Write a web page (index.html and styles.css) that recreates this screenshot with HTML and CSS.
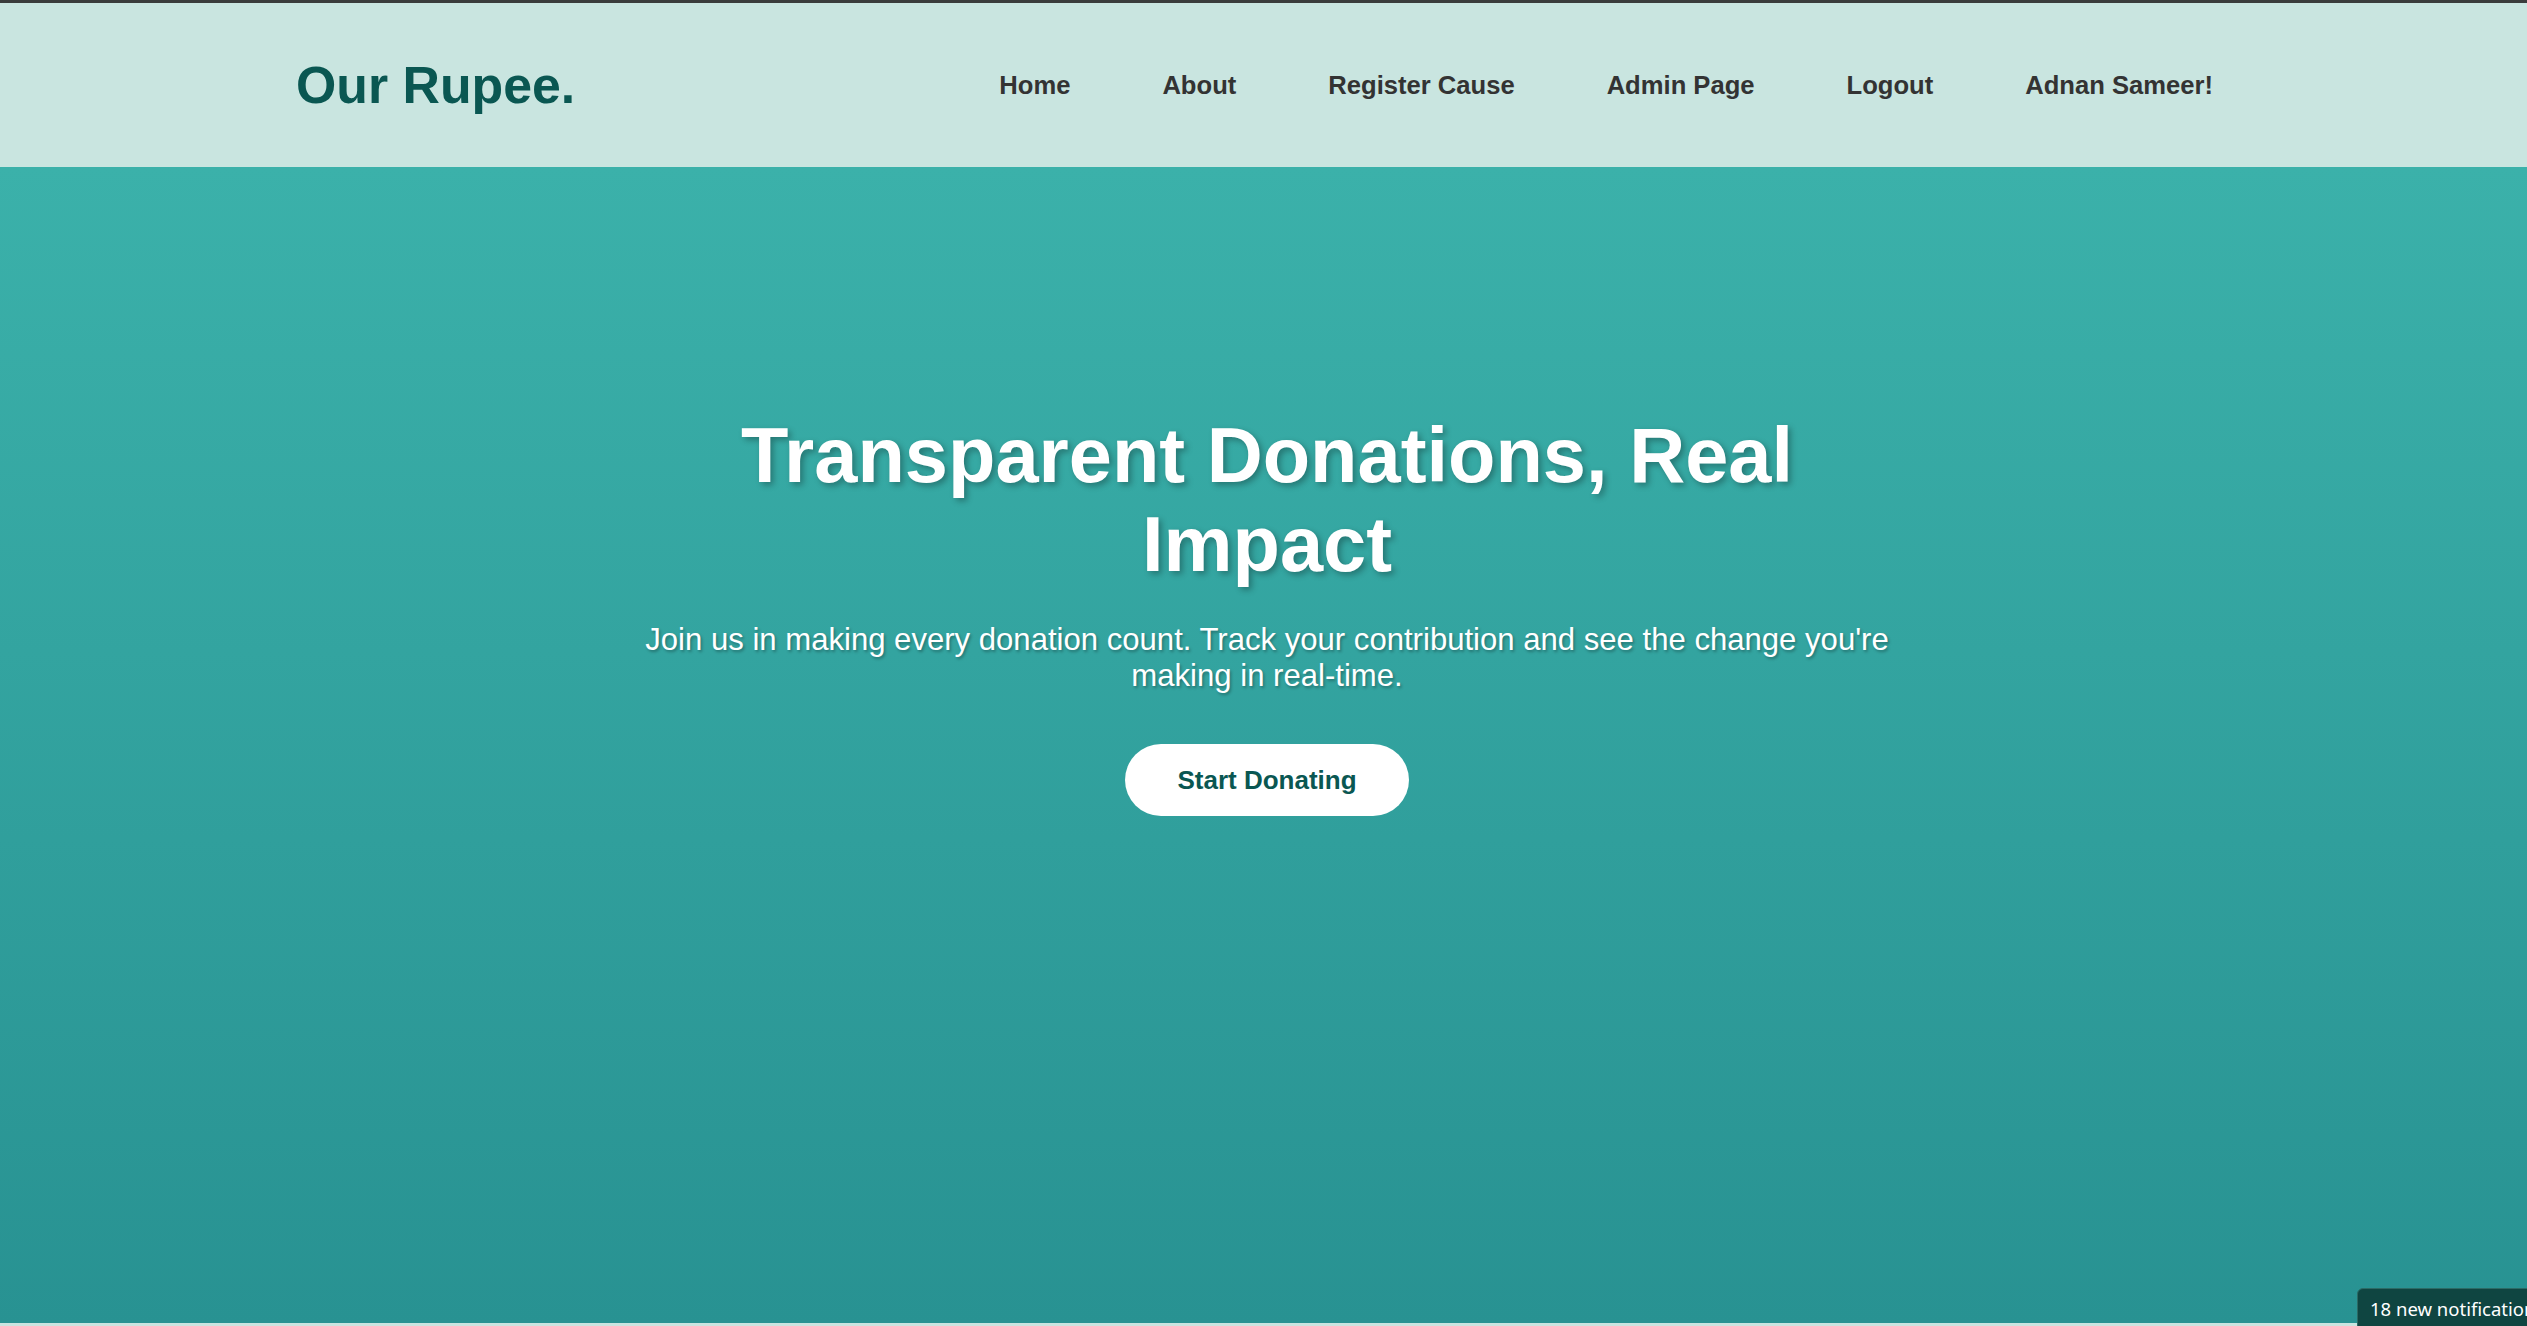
FILE: index.html
```html
<!DOCTYPE html>
<html lang="en">
<head>
<meta charset="utf-8">
<title>Our Rupee.</title>
<link rel="stylesheet" href="styles.css">
</head>
<body>
<div class="page">
  <header class="site-header">
    <a class="logo" href="#">Our Rupee.</a>
    <nav class="nav">
      <a href="#">Home</a>
      <a href="#">About</a>
      <a href="#">Register Cause</a>
      <a href="#">Admin Page</a>
      <a href="#">Logout</a>
      <a href="#">Adnan Sameer!</a>
    </nav>
  </header>
  <section class="hero">
    <div class="hero-content">
      <h1 class="hero-title">Transparent Donations, Real Impact</h1>
      <p class="hero-text">Join us in making every donation count. Track your contribution and see the change you're making in real-time.</p>
      <a class="hero-btn" href="#">Start Donating</a>
    </div>
  </section>
  <div class="strip"></div>
  <div class="toast">18 new notifications</div>
</div>
</body>
</html>
```

FILE: styles.css
```css
html, body {
  margin: 0;
  padding: 0;
  height: 100%;
  overflow: hidden;
}

body {
  font-family: "Liberation Sans", Arial, sans-serif;
  background: #c9e5e0;
}

.page {
  position: relative;
  height: 1326px;
  overflow: hidden;
  border-top: 3px solid #3a3c3c;
  box-sizing: border-box;
}

.site-header {
  height: 164px;
  background: #c9e5e0;
  display: flex;
  align-items: center;
  justify-content: space-between;
  padding: 0 314px 0 296px;
  box-sizing: border-box;
}

.logo {
  font-size: 51.8px;
  font-weight: 700;
  color: #0a5752;
  text-decoration: none;
}

.nav {
  display: flex;
  gap: 92px;
}

.nav a {
  font-size: 25.6px;
  font-weight: 700;
  color: #333333;
  text-decoration: none;
}

.hero {
  height: 1156px;
  background: linear-gradient(to bottom, #3bb1aa 0%, #289292 100%);
  padding-top: 244px;
  box-sizing: border-box;
}

.hero-content {
  max-width: 1280px;
  margin: 0 auto;
  padding-left: 7px;
  display: flex;
  flex-direction: column;
  align-items: center;
  text-align: center;
}

.hero-title {
  margin: 0;
  font-size: 77.6px;
  font-weight: 700;
  color: #ffffff;
  text-shadow: 3px 3px 6px rgba(0, 0, 0, 0.3);
}

.hero-text {
  margin: 33px 0 0;
  font-size: 31.1px;
  color: #ffffff;
  text-shadow: 1.5px 1.5px 3px rgba(0, 0, 0, 0.3);
}

.hero-btn {
  margin-top: 50px;
  display: inline-block;
  background: #ffffff;
  color: #0a5752;
  font-size: 26px;
  font-weight: 700;
  text-decoration: none;
  padding: 20.5px 52px;
  border-radius: 40px;
}

.strip {
  height: 3px;
  background: #c9e5e0;
}

.toast {
  position: absolute;
  left: 2357px;
  top: 1285px;
  width: 240px;
  height: 60px;
  background: #0f4541;
  border: 1px solid #2c6a65;
  border-radius: 6px 0 0 0;
  box-sizing: border-box;
  color: #ffffff;
  font-family: "Noto Sans", "Open Sans", sans-serif;
  font-size: 18.5px;
  padding: 7px 0 0 12px;
  white-space: nowrap;
}
```
